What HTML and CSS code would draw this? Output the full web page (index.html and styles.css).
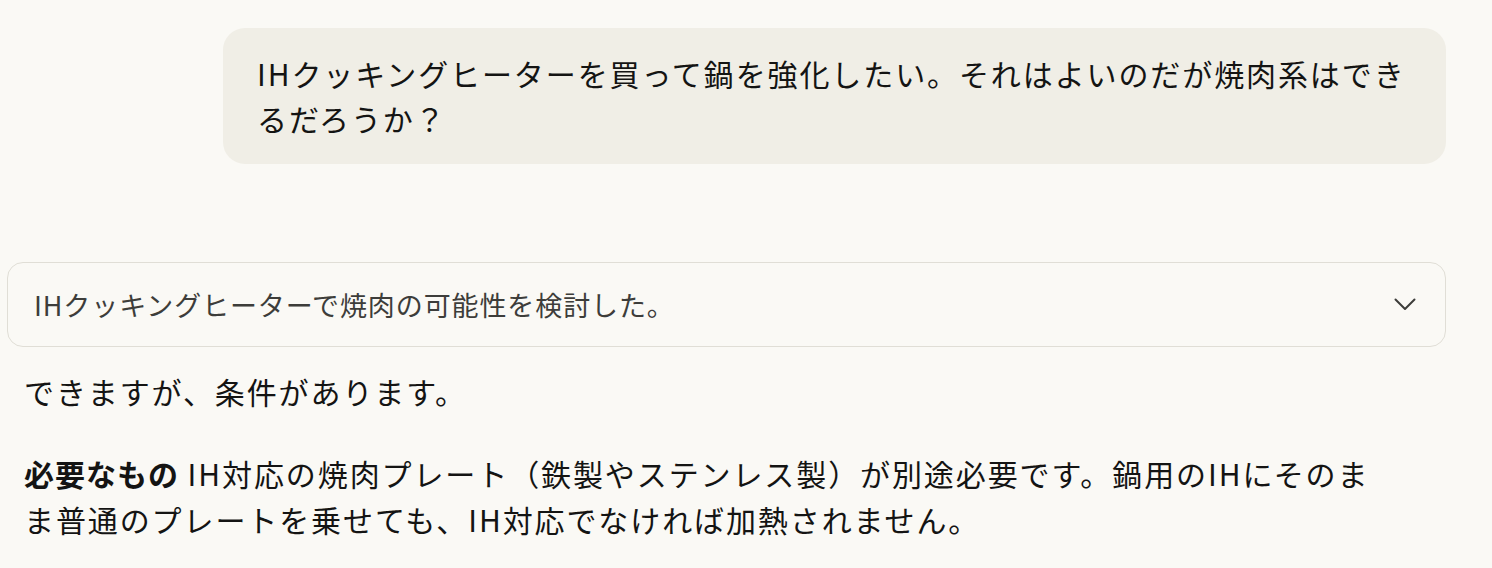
FILE: index.html
```html
<!DOCTYPE html>
<html lang="ja">
<head>
    <meta charset="UTF-8">
    <meta name="viewport" content="width=device-width, initial-scale=1.0">
    <title>IHクッキングヒーターで焼肉</title>
    <link rel="stylesheet" href="styles.css">
</head>
<body>

    <main class="thread">
        <!-- User message -->
        <div class="user-row">
            <div class="user-bubble">IHクッキングヒーターを買って鍋を強化したい。それはよいのだが焼肉系はできるだろうか？</div>
        </div>

        <!-- Assistant reply -->
        <div class="assistant">
            <button class="thinking" type="button">
                <span class="thinking-label">IHクッキングヒーターで焼肉の可能性を検討した。</span>
                <svg class="chevron" width="22" height="14" viewBox="0 0 22 14" fill="none">
                    <path d="M1.5 1.5 L11 11 L20.5 1.5" stroke="currentColor" stroke-width="2" stroke-linecap="round" stroke-linejoin="round"/>
                </svg>
            </button>

            <div class="answer">
                <p>できますが、条件があります。</p>
                <p><strong>必要なもの</strong> IH対応の焼肉プレート（鉄製やステンレス製）が別途必要です。鍋用のIHにそのまま普通のプレートを乗せても、IH対応でなければ加熱されません。</p>
            </div>
        </div>
    </main>

</body>
</html>
```

FILE: styles.css
```css
body {
    margin: 0;
    background-color: #faf9f5;
    color: #141413;
    font-family: "Noto Sans CJK JP", "Noto Sans", sans-serif;
}

.thread {
    padding: 28px 46px 0 7px;
}

/* User message */
.user-row {
    display: flex;
    justify-content: flex-end;
}

.user-bubble {
    max-width: 1223px;
    box-sizing: border-box;
    padding: 23px 34px;
    background-color: #f0eee6;
    border-radius: 22px;
    font-size: 30px;
    line-height: 45px;
    letter-spacing: 1.9px;
}

/* Assistant reply */
.assistant {
    margin-top: 98px;
}

.thinking {
    display: flex;
    align-items: center;
    justify-content: space-between;
    width: 100%;
    height: 85px;
    padding: 0 29px 0 26px;
    background: transparent;
    border: 1px solid #e0ded6;
    border-radius: 16px;
    color: #3d3d3a;
    font-family: inherit;
    cursor: pointer;
}

.thinking-label {
    font-size: 27px;
    letter-spacing: 0.9px;
}

.chevron {
    color: #3d3d3a;
}

.answer {
    padding: 0 70px 0 17px;
    font-size: 30px;
    line-height: 46px;
    letter-spacing: 1.9px;
}

.answer p {
    margin: 21px 0 0;
}

.answer p + p {
    margin-top: 36px;
}

.answer strong {
    font-weight: 700;
    letter-spacing: 1px;
}
```
